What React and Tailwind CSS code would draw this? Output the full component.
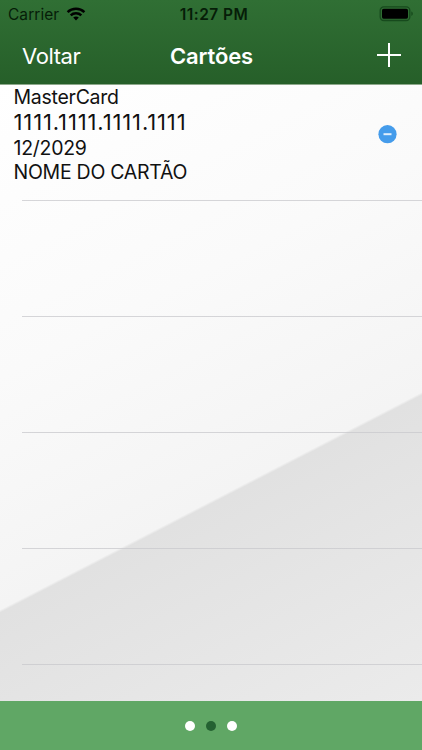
function StatusBar() {
  return (
    <div className="flex h-7 items-center text-[#061d08]">
      <div className="flex flex-1 items-center gap-[7px] pl-2">
        <span className="pt-px text-[15.5px] leading-7 tracking-[0.05px]">Carrier</span>
        <svg width="20" height="14" viewBox="0 0 20 14" fill="none" stroke="#000" strokeWidth="2.5" className="-mt-px">
          <path d="M1.6 5.1C6.2 .7 13.8 .7 18.4 5.1" />
          <path d="M4.7 8.3C7.6 5.5 12.4 5.5 15.3 8.3" />
          <path d="M10 13.4 7.2 10.5C8.8 9 11.2 9 12.8 10.5Z" fill="#000" stroke="none" />
        </svg>
      </div>
      <span className="pl-[5px] pt-0.5 text-[15.5px] font-semibold leading-7 tracking-[0.45px]">11:27 PM</span>
      <div className="flex flex-1 justify-end pr-[7px]">
        <svg width="36" height="16" viewBox="0 0 36 16">
          <rect x="1.2" y=".9" width="29.6" height="13.6" rx="3.5" fill="none" stroke="#174a1d" strokeWidth="1.3" />
          <rect x="3" y="2.7" width="26" height="10" rx="1.6" fill="#000" />
          <path d="M32.3 5.5c2 .6 2 3.8 0 4.4z" fill="#174a1d" />
        </svg>
      </div>
    </div>
  );
}

function NavBar() {
  return (
    <div className="flex h-14 items-center text-[22px] text-white">
      <div className="flex-1 pl-[22px] tracking-[-0.4px]">Voltar</div>
      <div className="font-semibold tracking-[-0.15px]">Cartões</div>
      <div className="flex flex-1 justify-end pr-[21px]">
        <svg className="-mt-0.5" width="24" height="24" viewBox="0 0 24 24" stroke="#fff" strokeWidth="2">
          <path d="M0 12H24M12 0V24" />
        </svg>
      </div>
    </div>
  );
}

function CardRow() {
  return (
    <div className="flex h-[115px] items-start justify-between pl-[13.5px] pr-[25px] text-[#111]">
      <div className="flex flex-col whitespace-nowrap text-[19.5px] tracking-[-0.27px]">
        <span className="h-6 leading-6">MasterCard</span>
        <span className="h-[27px] text-[22px] leading-[26px] tracking-[0.87px]">1111.1111.1111.1111</span>
        <span className="h-6 leading-6">12/2029</span>
        <span className="h-6 leading-6">NOME DO CARTÃO</span>
      </div>
      <svg className="mt-10" width="19" height="19" viewBox="0 0 19 19">
        <circle cx="9.5" cy="9.2" r="9.1" fill="#459ceb" />
        <path d="M5.5 9.2h8" stroke="#e1effc" strokeWidth="2" />
      </svg>
    </div>
  );
}

export default function App() {
  return (
    <div className="flex h-[750px] w-[422px] flex-col overflow-hidden font-['Inter',sans-serif]">
      <header className="h-[85px] shrink-0 border-b border-[#8da88b] bg-linear-to-b from-[#306f34] to-[#265f29]">
        <StatusBar />
        <NavBar />
      </header>
      <main className="h-[616px] shrink-0 overflow-hidden bg-[linear-gradient(152.7deg,#fff_0%,#fafafa_35%,#f4f4f4_62.95%,#e1e1e1_63.3%,#ebebeb_100%)]">
        <CardRow />
        {[0, 1, 2, 3, 4].map((row) => (
          <div key={row} className="h-[116px] pl-[22px]">
            <div className="h-px bg-[#c8c8cc]/75" />
          </div>
        ))}
      </main>
      <footer className="flex h-[49px] shrink-0 items-center justify-center gap-[11px] bg-[#60a765]">
        <span className="size-[10px] rounded-full bg-white" />
        <span className="size-[10px] rounded-full bg-[#246232]" />
        <span className="size-[10px] rounded-full bg-white" />
      </footer>
    </div>
  );
}
